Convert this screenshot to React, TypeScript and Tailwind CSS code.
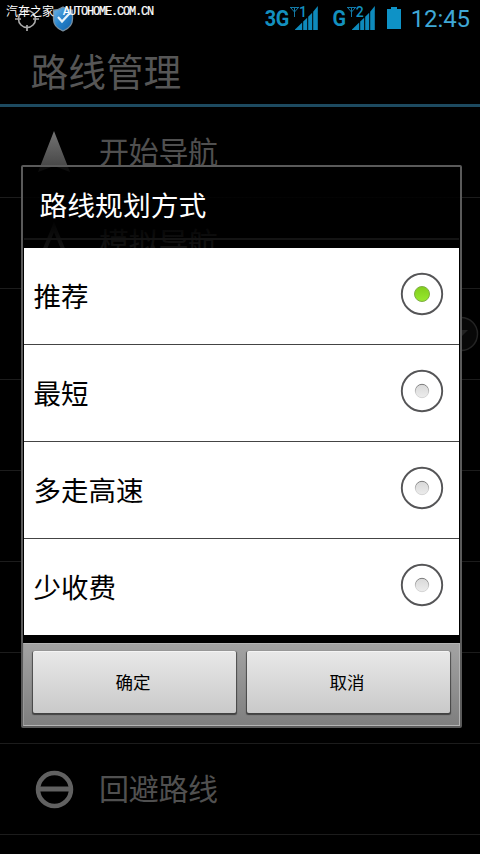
import { useState } from "react";

const ROUTE_MODES = ["推荐", "最短", "多走高速", "少收费"];

function SignalBars() {
    return (
        <svg width="24" height="24" viewBox="0 0 24 24" fill="#0e8abc">
            <path d="M0 24V23.4L7.2 16.5V24Z" />
            <path d="M8.2 15.6L12.2 11.7V24H8.2Z" />
            <path d="M13.2 10.7L17.2 6.8V24H13.2Z" />
            <path d="M18.2 5.8L22.8 0V24H18.2Z" />
        </svg>
    );
}

function Signal({ type, sim }: { type: string; sim: string }) {
    return (
        <div className="flex h-full items-start">
            <span className="mt-[6px] origin-right scale-x-90 text-[22px] leading-[26px] font-bold tracking-[-0.4px]">{type}</span>
            <div className="relative mt-[6px] ml-[6px]">
                <SignalBars />
                <svg className="absolute top-[1px] -left-[5px]" width="9" height="10" viewBox="0 0 9 10" fill="none" stroke="#1279a5">
                    <path d="M0 .5H9M.8 .8L4.5 5L8.2 .8M4.5 0V10" />
                </svg>
                <span className="absolute -top-[1px] left-[4px] text-[14px] leading-[14px] font-medium">{sim}</span>
            </div>
        </div>
    );
}

function StatusBar() {
    return (
        <div className="relative flex h-[38px] shrink-0 justify-end pr-[10px] text-[#1390bf]">
            <div className="absolute top-0 left-0">
                <svg width="80" height="34" viewBox="0 0 80 34" fill="none">
                    <defs>
                        <linearGradient id="shield" x1="0" y1="0" x2="1" y2="1">
                            <stop offset="0" stopColor="#73b7e6" />
                            <stop offset="0.5" stopColor="#2582cb" />
                            <stop offset="1" stopColor="#1261a8" />
                        </linearGradient>
                    </defs>
                    <circle cx="27" cy="19" r="8.5" stroke="#aaa" strokeWidth="1.6" />
                    <path d="M27 7.500V13M27 25V31M15 19H21M33 19H39" stroke="#aaa" strokeWidth="1.7" />
                    <path d="M63 7C60 9 57 10 53.500 10.200V19C53.500 25 58 29 63 31C68 29 72.500 25 72.500 19V10.200C69 10 66 9 63 7Z" fill="url(#shield)" stroke="#7c8f9e" strokeWidth="1.3" />
                    <path d="M58 17L62 21.500L69 14" stroke="#e6f2fa" strokeWidth="2.200" />
                </svg>
            </div>
            <div className="absolute top-[4px] left-[6px] flex h-[14px] items-center text-[12px] leading-[14px] whitespace-pre text-white">
                <span className="w-[57px] font-['Noto_Sans_CJK_SC',sans-serif]">汽车之家</span>
                <span className="pt-[1px] font-['Liberation_Mono',monospace] text-[12px] tracking-[-1.2px] [-webkit-text-stroke:0.2px_white]">AUTOHOME.COM.CN</span>
            </div>
            <div className="flex items-start">
                <Signal type="3G" sim="1" />
                <div className="w-[12px]" />
                <Signal type="G" sim="2" />
                <svg className="mt-[7px] ml-[11px]" width="14" height="22" viewBox="0 0 14 22" fill="#0e92c6">
                    <path d="M4 0H10V2H14V22H0V2H4Z" />
                </svg>
                <span className="mt-[5px] ml-[10px] text-[24px] leading-[29px] tracking-[-0.1px] text-[#3fa8d6]">12:45</span>
            </div>
        </div>
    );
}

function ArrowIcon() {
    return (
        <svg width="36" height="44" viewBox="0 0 36 44">
            <defs>
                <linearGradient id="arrow" x1="0" y1="0" x2="0" y2="1">
                    <stop offset="0" stopColor="#747474" />
                    <stop offset="1" stopColor="#404040" />
                </linearGradient>
            </defs>
            <path d="M18 1L34 42L18 36L2 42Z" fill="url(#arrow)" />
        </svg>
    );
}

function OutlineArrowIcon() {
    return (
        <svg width="36" height="44" viewBox="0 0 36 44" fill="none">
            <path d="M18 6L32 40L18 34L4 40Z" stroke="#505050" strokeWidth="4" />
        </svg>
    );
}

function AvoidIcon() {
    return (
        <svg width="40" height="40" viewBox="0 0 40 40" fill="none" stroke="#616161">
            <circle cx="20.500" cy="20.500" r="16.500" strokeWidth="4.500" />
            <path d="M4 20H37" strokeWidth="5" />
        </svg>
    );
}

function MenuRow({ label, icon, expand }: { label?: string; icon?: React.ReactNode; expand?: boolean }) {
    return (
        <div className="flex h-[91px] shrink-0 items-center border-b border-[#1c1c1c]">
            <div className="ml-[34px] flex w-[40px] justify-center">{icon}</div>
            <span className="ml-[25px] pt-[2px] text-[30px] leading-[36px] tracking-[-0.3px] text-[#505050]">{label}</span>
            {expand && (
                <svg className="mr-[1px] ml-auto" width="36" height="36" viewBox="0 0 36 36">
                    <circle cx="18" cy="18" r="16.500" fill="#080808" stroke="#242424" strokeWidth="1.500" />
                    <path d="M11 14H25L18 21Z" fill="#222" />
                </svg>
            )}
        </div>
    );
}

function Radio({ checked }: { checked: boolean }) {
    return (
        <svg width="44" height="44" viewBox="0 0 44 44">
            <defs>
                <linearGradient id="radioOn" x1="0" y1="0" x2="0" y2="1">
                    <stop offset="0" stopColor="#82ce1c" />
                    <stop offset="1" stopColor="#98e92e" />
                </linearGradient>
                <linearGradient id="radioOff" x1="0" y1="0" x2="0" y2="1">
                    <stop offset="0" stopColor="#d8d8d8" />
                    <stop offset="1" stopColor="#ececec" />
                </linearGradient>
                <linearGradient id="radioRim" x1="0" y1="0" x2="0" y2="1">
                    <stop offset="0" stopColor="#777" />
                    <stop offset="0.7" stopColor="#d4d4d4" />
                </linearGradient>
            </defs>
            <circle cx="22" cy="22" r="20.200" fill="#fff" stroke="#555557" strokeWidth="1.900" />
            {checked ? (
                <circle cx="22" cy="22" r="7.500" fill="url(#radioOn)" stroke="#7fae45" />
            ) : (
                <circle cx="22" cy="22" r="6.700" fill="url(#radioOff)" stroke="url(#radioRim)" />
            )}
        </svg>
    );
}

function DialogButton({ label }: { label: string }) {
    return (
        <button className="h-[62px] flex-1 rounded-[2px] border-t border-[#f4f4f4] bg-linear-to-b from-[#e8e8e8] to-[#c9c9c9] pt-[2px] pr-[3px] text-[17.500px] text-black shadow-[0_1px_1px_0.5px_rgba(0,0,0,0.5)]">
            {label}
        </button>
    );
}

function RouteModeDialog() {
    const [selected, setSelected] = useState(0);

    return (
        <div className="absolute top-[165px] left-[21px] flex h-[563px] w-[441px] flex-col rounded-[2px] border-2 border-[#5a5a5a]">
            <div className="flex h-[81px] shrink-0 flex-col bg-linear-to-b from-black/80 via-black/95 via-70% to-black/75 px-px">
                <h2 className="mt-[20px] ml-[15.500px] text-[27.800px] leading-[40px] text-white">路线规划方式</h2>
                <div className="mt-[11px] h-[2px] shrink-0 bg-[#141414]" />
            </div>

            <div className="bg-black px-px pb-[8px]">
                {ROUTE_MODES.map((mode, i) => (
                    <div
                        key={mode}
                        onClick={() => setSelected(i)}
                        className="flex h-[97px] items-center justify-between border-b border-[#444] bg-white pr-[15px] pl-[9.500px] last:h-[96px] last:border-b-0"
                    >
                        <span className="pt-[3px] text-[27.500px] leading-[40px] text-black">{mode}</span>
                        <div className="pb-[4px]">
                            <Radio checked={selected === i} />
                        </div>
                    </div>
                ))}
            </div>

            <div className="flex flex-1 items-start gap-[11px] border border-[#b4b4b4] border-l-[#999] bg-linear-to-b from-[#a3a3a3] to-[#7f7f7f] px-[9px] pt-[7px]">
                <DialogButton label="确定" />
                <DialogButton label="取消" />
            </div>
        </div>
    );
}

export default function App() {
    return (
        <div className="relative flex h-[854px] w-[480px] flex-col overflow-hidden bg-black font-[Roboto,'Noto_Sans_CJK_SC',sans-serif]">
            <StatusBar />
            <div className="flex h-[69px] shrink-0 items-center border-b-3 border-[#1d4a60] pl-[30.500px]">
                <h1 className="pt-[4px] text-[37.700px] leading-[50px] text-[#565656]">路线管理</h1>
            </div>
            <MenuRow label="开始导航" icon={<ArrowIcon />} />
            <MenuRow label="模拟导航" icon={<OutlineArrowIcon />} />
            <MenuRow expand />
            <MenuRow />
            <MenuRow />
            <MenuRow />
            <MenuRow />
            <MenuRow label="回避路线" icon={<AvoidIcon />} />
            <RouteModeDialog />
        </div>
    );
}
